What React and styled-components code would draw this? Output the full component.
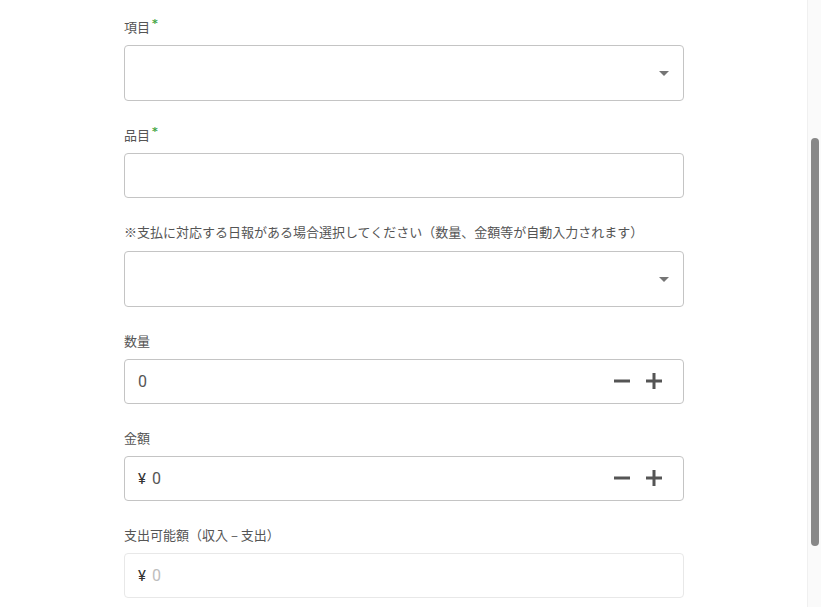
import React from "react";
import styled, { createGlobalStyle } from "styled-components";

const GlobalStyle = createGlobalStyle`
  html, body {
    margin: 0;
    padding: 0;
    background: #ffffff;
  }
  body {
    font-family: "Noto Sans CJK JP", "Noto Sans", sans-serif;
  }
`;

const Page = styled.div`
  display: flex;
  height: 607px;
  overflow: hidden;
`;

const Main = styled.main`
  flex: 1;
  padding: 17px 0 0 124px;
`;

const Form = styled.div`
  width: 560px;
  display: flex;
  flex-direction: column;
  gap: 24px;
`;

const Field = styled.div`
  display: flex;
  flex-direction: column;
`;

const Label = styled.label`
  font-size: 13px;
  line-height: 20px;
  color: #555555;
  margin-bottom: 8.2px;
  white-space: nowrap;
`;

const Required = styled.span`
  color: #44a544;
  font-family: "DejaVu Sans", sans-serif;
  font-weight: bold;
  font-size: 11px;
  vertical-align: top;
  line-height: 14px;
  margin-left: 2px;
`;

const Box = styled.div`
  box-sizing: border-box;
  display: flex;
  align-items: center;
  height: ${(p) => (p.$tall ? "56px" : "45px")};
  border: 1px solid ${(p) => (p.$disabled ? "#e8e8e8" : "#c4c4c4")};
  border-radius: 4px;
  padding: 0 ${(p) => (p.$tall ? "7px" : "14px")} 0 13px;
  background: #ffffff;
`;

const Value = styled.span`
  flex: 1;
  font-size: 16px;
  color: #555555;
  font-family: Roboto, "Noto Sans CJK JP", sans-serif;
`;

const Yen = styled.span`
  color: #333333;
  font-size: 15px;
  margin-right: 6px;
`;

const Muted = styled.span`
  color: #bdbdbd;
`;

const Steps = styled.div`
  display: flex;
  align-items: center;
  gap: 12px;
  margin-right: 5px;
`;

const StepButton = styled.button`
  border: none;
  background: none;
  padding: 0;
  width: 20px;
  height: 20px;
  display: flex;
  align-items: center;
  justify-content: center;
  cursor: pointer;
`;

const Scrollbar = styled.div`
  width: 13px;
  background: #fafafa;
  border-left: 1px solid #f0f0f0;
  display: flex;
  justify-content: center;
`;

const Thumb = styled.div`
  width: 8px;
  height: 408px;
  margin-top: 138px;
  margin-left: 1px;
  border-radius: 4px;
  background: #888888;
`;

const Arrow = () => (
  <svg width="24" height="24" viewBox="0 0 24 24">
    <path d="M7 10l5 5 5-5z" fill="#757575" />
  </svg>
);

const Minus = () => (
  <svg width="18" height="18" viewBox="0 0 18 18">
    <path d="M1 9h16" stroke="#555" strokeWidth="3" />
  </svg>
);

const Plus = () => (
  <svg width="18" height="18" viewBox="0 0 18 18">
    <path d="M1 9h16M9 1v16" stroke="#555" strokeWidth="3" />
  </svg>
);

const Stepper = () => (
  <Steps>
    <StepButton>
      <Minus />
    </StepButton>
    <StepButton>
      <Plus />
    </StepButton>
  </Steps>
);

const App = () => {
  return (
    <>
      <GlobalStyle />
      <Page>
        <Main>
          <Form>
            <Field>
              <Label>
                項目<Required>*</Required>
              </Label>
              <Box $tall>
                <Value />
                <Arrow />
              </Box>
            </Field>
            <Field>
              <Label>
                品目<Required>*</Required>
              </Label>
              <Box>
                <Value />
              </Box>
            </Field>
            <Field>
              <Label>
                ※支払に対応する日報がある場合選択してください（数量、金額等が自動入力されます）
              </Label>
              <Box $tall>
                <Value />
                <Arrow />
              </Box>
            </Field>
            <Field>
              <Label>数量</Label>
              <Box>
                <Value>0</Value>
                <Stepper />
              </Box>
            </Field>
            <Field>
              <Label>金額</Label>
              <Box>
                <Value>
                  <Yen>¥</Yen>0
                </Value>
                <Stepper />
              </Box>
            </Field>
            <Field>
              <Label>支出可能額（収入 – 支出）</Label>
              <Box $disabled>
                <Value>
                  <Yen>¥</Yen>
                  <Muted>0</Muted>
                </Value>
              </Box>
            </Field>
          </Form>
        </Main>
        <Scrollbar>
          <Thumb />
        </Scrollbar>
      </Page>
    </>
  );
};

export default App;
